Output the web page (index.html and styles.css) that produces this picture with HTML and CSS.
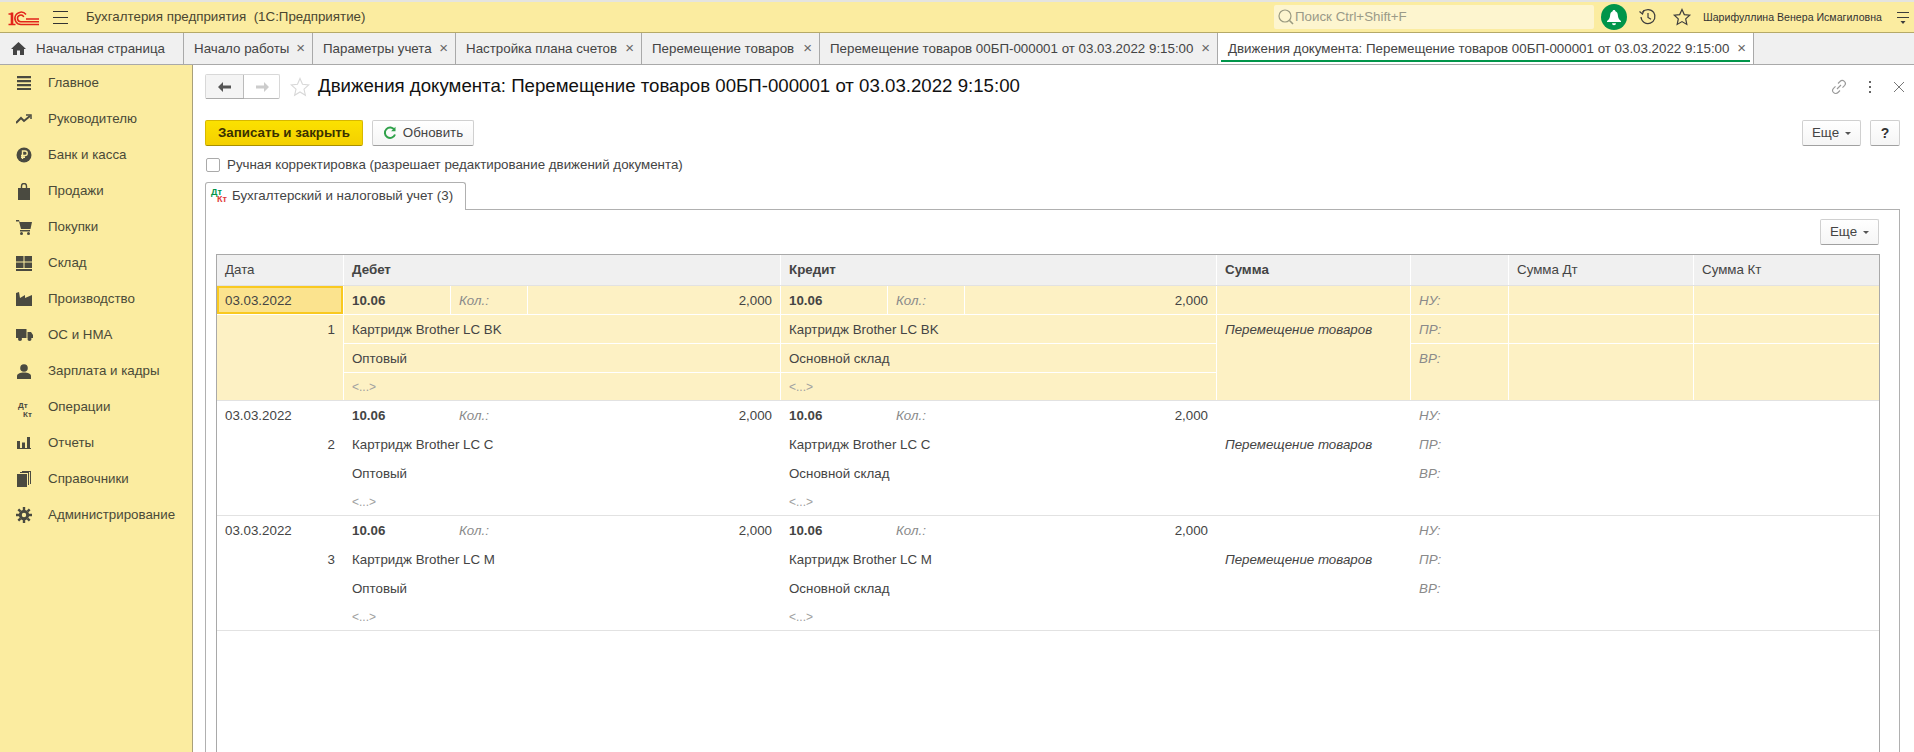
FILE: index.html
```html
<!DOCTYPE html>
<html lang="ru">
<head>
<meta charset="utf-8">
<title>Движения документа</title>
<link rel="stylesheet" href="styles.css">
</head>
<body>
<div class="app">
  <header class="topbar">
    <svg class="logo" width="31" height="17" viewBox="0 0 31 17" fill="none" stroke="#e2231a">
      <path d="M4 3.500V15" stroke-width="2.600"/>
      <path d="M0.500 5H4M0.500 15.500H7.500" stroke-width="1.600"/>
      <path d="M31 15.500H13A6.200 6.200 0 1 1 18 5.500" stroke-width="1.500"/>
      <path d="M31 12.700H13A3.300 3.300 0 1 1 15.800 8" stroke-width="1.500"/>
      <path d="M18 10H31" stroke-width="1.500"/>
    </svg>
    <span class="burger"><i></i><i></i><i></i></span>
    <span class="app-title">Бухгалтерия предприятия&nbsp; (1С:Предприятие)</span>
    <div class="search">
      <svg width="17" height="18" viewBox="0 0 17 18" fill="none" stroke="#9a9a80" stroke-width="1.2"><circle cx="8" cy="8" r="6"/><path d="M12.5 12.5 L16 16" stroke-width="1.6"/></svg>
      <span>Поиск Ctrl+Shift+F</span>
    </div>
    <span class="bell">
      <svg width="16" height="17" viewBox="0 0 16 17" fill="#fff"><path d="M8 1c.8 0 1.300.5 1.400 1.200 1.800.6 2.300 2.300 2.500 4.200.2 2.700 1.200 4.100 3.100 5.600v1H1v-1c1.900-1.500 2.900-2.900 3.100-5.600.2-1.900.7-3.600 2.500-4.200C6.700 1.500 7.200 1 8 1z"/><path d="M6 14.200h4a2 2 0 0 1-4 0z"/></svg>
    </span>
    <svg class="hist" width="20" height="20" viewBox="0 0 20 20" fill="none" stroke="#3c3c3c" stroke-width="1.2"><path d="M4.500 5.200A7 7 0 1 1 3 10"/><path d="M1.500 4.500 L4.500 7 L5.800 3.200" /><path d="M10 6v4.500l3 1.800"/></svg>
    <svg class="fav" width="20" height="20" viewBox="0 0 20 20" fill="none" stroke="#3c3c3c" stroke-width="1.2"><path d="M10 2.500l2.300 5.100 5.400.6-4 3.700 1.100 5.500L10 14.600l-4.800 2.800 1.100-5.500-4-3.700 5.400-.6z"/></svg>
    <span class="user">Шарифуллина Венера Исмагиловна</span>
    <svg class="more" width="14" height="16" viewBox="0 0 14 16"><path d="M1 3.500h12M1 8.500h12" stroke="#3c3c3c" stroke-width="1"/><path d="M4.500 12h5L7 15z" fill="#3c3c3c"/></svg>
  </header>

  <nav class="tabs">
    <div class="tab tab-home">
      <svg width="15" height="13" viewBox="0 0 15 13" fill="#444"><path d="M7.500 0L15 7h-2v6H9V8.500H6V13H2V7H0z"/></svg>
      <span>Начальная страница</span>
    </div>
    <div class="tab tab-w1"><span>Начало работы</span><b class="x">×</b></div>
    <div class="tab tab-w2"><span>Параметры учета</span><b class="x">×</b></div>
    <div class="tab tab-w3"><span>Настройка плана счетов</span><b class="x">×</b></div>
    <div class="tab tab-w4"><span>Перемещение товаров</span><b class="x">×</b></div>
    <div class="tab tab-w5"><span>Перемещение товаров 00БП-000001 от 03.03.2022 9:15:00</span><b class="x">×</b></div>
    <div class="tab tab-w6 active"><span>Движения документа: Перемещение товаров 00БП-000001 от 03.03.2022 9:15:00</span><b class="x">×</b></div>
  </nav>

  <div class="main">
    <aside class="sidebar">
      <div class="item"><span class="ico"><svg width="16" height="14" viewBox="0 0 16 14" fill="#4a4a40"><path d="M1 0h14v2.200H1zM1 4h14v2.200H1zM1 8h14v2.200H1zM1 12h14v2H1z"/></svg></span>Главное</div>
      <div class="item"><span class="ico"><svg width="16" height="10" viewBox="0 0 16 10" fill="none" stroke="#4a4a40" stroke-width="2"><path d="M0 9l5-5 3 3 6-5"/><path d="M10 1h5v4" stroke-width="1.500"/></svg></span>Руководителю</div>
      <div class="item"><span class="ico"><svg width="16" height="16" viewBox="0 0 16 16"><circle cx="8" cy="8" r="7.500" fill="#4a4a40"/><path d="M6.500 12V4h2.500a2.200 2.200 0 0 1 0 4.500H5M5 10.200h4" fill="none" stroke="#fbeca0" stroke-width="1.400"/></svg></span>Банк и касса</div>
      <div class="item"><span class="ico"><svg width="14" height="17" viewBox="0 0 14 17" fill="#4a4a40"><path d="M1 5h12v12H1z"/><path d="M4.500 6V3a2.500 2.500 0 0 1 5 0v3" fill="none" stroke="#4a4a40" stroke-width="1.400"/></svg></span>Продажи</div>
      <div class="item"><span class="ico"><svg width="16" height="15" viewBox="0 0 16 15" fill="#4a4a40"><path d="M0 0h3l.6 2H16l-1.500 7H5L3 1.500H0z"/><path d="M4 10h10v1.500H4z"/><circle cx="5.500" cy="13.500" r="1.500"/><circle cx="12.500" cy="13.500" r="1.500"/></svg></span>Покупки</div>
      <div class="item"><span class="ico"><svg width="16" height="15" viewBox="0 0 16 15" fill="#4a4a40"><path d="M0 0h7.500v5.500H0zM8.500 0H16v5.500H8.500zM0 6.500h7.500V12H0zM8.500 6.500H16V12H8.500zM0 13h16v2H0z"/></svg></span>Склад</div>
      <div class="item"><span class="ico"><svg width="16" height="14" viewBox="0 0 16 14" fill="#4a4a40"><path d="M0 14V1l3-1 1 6 5-3v3l7-3v11z"/></svg></span>Производство</div>
      <div class="item"><span class="ico"><svg width="17" height="12" viewBox="0 0 17 12" fill="#4a4a40"><path d="M0 0h10.500v9H0zM11.500 3H15l2 3v3h-5.500z"/><circle cx="4" cy="10" r="2"/><circle cx="13.500" cy="10" r="2"/></svg></span>ОС и НМА</div>
      <div class="item"><span class="ico"><svg width="14" height="15" viewBox="0 0 14 15" fill="#4a4a40"><circle cx="7" cy="4" r="3.800"/><path d="M0 15v-3c0-2 3-3.500 7-3.500s7 1.500 7 3.500v3z"/></svg></span>Зарплата и кадры</div>
      <div class="item"><span class="ico-text"><span class="dtkt nav"><em>Дт</em><em>Кт</em></span></span>Операции</div>
      <div class="item"><span class="ico"><svg width="14" height="12" viewBox="0 0 14 12" fill="#4a4a40"><path d="M0 4h3v7H0zM5 5.500h3V11H5zM10 0h3v11h-3zM0 11h14v1H0z"/></svg></span>Отчеты</div>
      <div class="item"><span class="ico"><svg width="14" height="16" viewBox="0 0 14 16" fill="#4a4a40"><path d="M0 3h10v13H0z"/><path d="M11.500 2v12M13.500 0v13M3 1.500h9M5 .5h9" fill="none" stroke="#4a4a40"/></svg></span>Справочники</div>
      <div class="item"><span class="ico"><svg width="16" height="16" viewBox="0 0 16 16" fill="none" stroke="#4a4a40"><circle cx="8" cy="8" r="3.700" stroke-width="3"/><path d="M8 0v3M8 13v3M0 8h3M13 8h3M2.300 2.300l2.100 2.100M11.600 11.600l2.100 2.100M2.300 13.700l2.100-2.100M11.600 4.400l2.100-2.100" stroke-width="2.400"/></svg></span>Администрирование</div>
    </aside>

    <section class="content">
      <div class="titlebar">
        <div class="navbtns">
          <span class="navbtn"><svg width="14" height="10" viewBox="0 0 14 10" fill="#555"><path d="M0 5l5-5v3.500h8v3H5V10z"/></svg></span>
          <span class="navbtn"><svg width="14" height="10" viewBox="0 0 14 10" fill="#ccc"><path d="M14 5L9 0v3.500H1v3h8V10z"/></svg></span>
        </div>
        <svg class="title-star" width="20" height="20" viewBox="0 0 20 20" fill="none" stroke="#d8d8d8" stroke-width="1.100"><path d="M10 1.500l2.500 5.800 6.200.6-4.700 4.200 1.400 6.200L10 15l-5.400 3.300L6 12.100 1.300 7.900l6.200-.6z"/></svg>
        <h1>Движения документа: Перемещение товаров 00БП-000001 от 03.03.2022 9:15:00</h1>
        <div class="win-icons">
          <svg width="16" height="16" viewBox="0 0 16 16" fill="none" stroke="#999" stroke-width="1.100"><path d="M6 10l4-4M7 4.500l2-2a3 3 0 0 1 4.500 4.200l-2 2M9 11.500l-2 2A3 3 0 0 1 2.500 9.300l2-2"/></svg>
          <svg width="4" height="14" viewBox="0 0 4 14" fill="#666"><rect x="1" y="1" width="2" height="2"/><rect x="1" y="6" width="2" height="2"/><rect x="1" y="11" width="2" height="2"/></svg>
          <svg width="12" height="12" viewBox="0 0 12 12" stroke="#777" stroke-width="1"><path d="M1 1l10 10M11 1L1 11"/></svg>
        </div>
      </div>

      <div class="cmdbar">
        <button class="btn primary">Записать и закрыть</button>
        <button class="btn refresh">
          <svg width="14" height="14" viewBox="0 0 14 14" fill="none" stroke="#2fa14a" stroke-width="2"><path d="M11.500 4A5.200 5.200 0 1 0 12 8.500"/><path d="M12.500 .8v4.400H8.100" fill="#2fa14a" stroke-width="0"/></svg>
          Обновить
        </button>
        <button class="btn more-btn">Еще<i class="caret"></i></button>
        <button class="btn help">?</button>
      </div>

      <label class="check"><span class="box"></span>Ручная корректировка (разрешает редактирование движений документа)</label>

      <div class="pagetabs">
        <div class="pagetab"><span class="dtkt"><em class="g">Дт</em><em class="r">Кт</em></span>Бухгалтерский и налоговый учет (3)</div>
      </div>

      <div class="panel">
        <div class="panel-cmd"><button class="btn more-btn">Еще<i class="caret"></i></button></div>
        <div class="table">
          <div class="thead">
            <div class="th">Дата</div>
            <div class="th strong s3">Дебет</div>
            <div class="th strong s3">Кредит</div>
            <div class="th strong">Сумма</div>
            <div class="th"></div>
            <div class="th">Сумма Дт</div>
            <div class="th">Сумма Кт</div>
          </div>

          <div class="trow selected">
            <div class="c current">03.03.2022</div>
            <div class="c strong">10.06</div><div class="c lbl">Кол.:</div><div class="c num">2,000</div>
            <div class="c strong">10.06</div><div class="c lbl">Кол.:</div><div class="c num">2,000</div>
            <div class="c"></div><div class="c lbl">НУ:</div><div class="c"></div><div class="c"></div>
            <div class="c num v3">1</div>
            <div class="c s3">Картридж Brother LC BK</div>
            <div class="c s3">Картридж Brother LC BK</div>
            <div class="c it v3">Перемещение товаров</div>
            <div class="c lbl">ПР:</div><div class="c"></div><div class="c"></div>
            <div class="c s3">Оптовый</div>
            <div class="c s3">Основной склад</div>
            <div class="c lbl v2">ВР:</div><div class="c v2"></div><div class="c v2"></div>
            <div class="c s3 ph">&lt;...&gt;</div>
            <div class="c s3 ph">&lt;...&gt;</div>
          </div>

          <div class="trow">
            <div class="c">03.03.2022</div>
            <div class="c strong">10.06</div><div class="c lbl">Кол.:</div><div class="c num">2,000</div>
            <div class="c strong">10.06</div><div class="c lbl">Кол.:</div><div class="c num">2,000</div>
            <div class="c"></div><div class="c lbl">НУ:</div><div class="c"></div><div class="c"></div>
            <div class="c num v3">2</div>
            <div class="c s3">Картридж Brother LC C</div>
            <div class="c s3">Картридж Brother LC C</div>
            <div class="c it v3">Перемещение товаров</div>
            <div class="c lbl">ПР:</div><div class="c"></div><div class="c"></div>
            <div class="c s3">Оптовый</div>
            <div class="c s3">Основной склад</div>
            <div class="c lbl v2">ВР:</div><div class="c v2"></div><div class="c v2"></div>
            <div class="c s3 ph">&lt;...&gt;</div>
            <div class="c s3 ph">&lt;...&gt;</div>
          </div>

          <div class="trow">
            <div class="c">03.03.2022</div>
            <div class="c strong">10.06</div><div class="c lbl">Кол.:</div><div class="c num">2,000</div>
            <div class="c strong">10.06</div><div class="c lbl">Кол.:</div><div class="c num">2,000</div>
            <div class="c"></div><div class="c lbl">НУ:</div><div class="c"></div><div class="c"></div>
            <div class="c num v3">3</div>
            <div class="c s3">Картридж Brother LC M</div>
            <div class="c s3">Картридж Brother LC M</div>
            <div class="c it v3">Перемещение товаров</div>
            <div class="c lbl">ПР:</div><div class="c"></div><div class="c"></div>
            <div class="c s3">Оптовый</div>
            <div class="c s3">Основной склад</div>
            <div class="c lbl v2">ВР:</div><div class="c v2"></div><div class="c v2"></div>
            <div class="c s3 ph">&lt;...&gt;</div>
            <div class="c s3 ph">&lt;...&gt;</div>
          </div>
        </div>
      </div>
    </section>
  </div>
</div>
</body>
</html>
```

FILE: styles.css
```css
* { box-sizing: border-box; }
html, body { margin: 0; padding: 0; height: 100%; overflow: hidden; background: #fff; }
body { font: 13.33px/1.2 "Liberation Sans", Arial, sans-serif; color: #333; }
.app { height: 752px; display: flex; flex-direction: column; overflow: hidden; }

/* top bar */
.topbar { height: 33px; flex: none; display: flex; align-items: center; background: #fbeca0; border-top: 2px solid #e4e4e0; border-bottom: 1px solid #b5a968; }
.logo { margin-left: 8px; flex: none; }
.burger { margin-left: 14px; width: 15px; display: flex; flex-direction: column; gap: 5px; flex: none; }
.burger i { display: block; height: 1px; background: #333; }
.app-title { margin-left: 18px; color: #4a4630; white-space: pre; width: 1188px; flex: none; }
.search { width: 320px; height: 24px; flex: none; display: flex; align-items: center; gap: 1px; padding-left: 3px; background: #fdf5cf; color: #9a9a88; border-radius: 2px; }
.bell { width: 26px; height: 26px; margin-left: 7px; flex: none; border-radius: 50%; background: #00954a; display: flex; align-items: center; justify-content: center; }
.hist { margin-left: 11px; flex: none; }
.fav { margin-left: 14px; flex: none; }
.user { margin-left: 11px; width: 189px; flex: none; font-size: 10.6px; color: #333; white-space: nowrap; }
.more { flex: none; margin-left: 4px; }

/* open-window tabs */
.tabs { height: 32px; flex: none; display: flex; background: #f0f0f0; border-bottom: 1px solid #a9a9a9; }
.tab { position: relative; display: flex; align-items: center; padding-left: 10px; border-right: 1px solid #a9a9a9; color: #444; white-space: nowrap; flex: none; }
.tab .x { position: absolute; right: 7px; top: 6px; font-weight: 400; font-size: 15px; line-height: 18px; color: #666; }
.tab-home { width: 184px; padding-left: 11px; gap: 10px; }
.tab-w1 { width: 129px; }
.tab-w2 { width: 143px; }
.tab-w3 { width: 186px; }
.tab-w4 { width: 178px; }
.tab-w5 { width: 398px; }
.tab-w6 { width: 536px; }
.tab.active { background: #fff; }
.tab.active::after { content: ""; position: absolute; left: 3px; right: 3px; bottom: 2px; height: 2px; background: #00954a; }

/* left navigation */
.main { flex: 1; display: flex; min-height: 0; }
.sidebar { width: 193px; flex: none; background: #fbeca0; border-right: 1px solid #a9a07a; }
.item { height: 36px; display: flex; align-items: center; color: #4a4a38; }
.ico { width: 48px; flex: none; display: flex; justify-content: center; }
.ico-text { width: 48px; flex: none; padding-left: 18px; }

.dtkt { display: inline-flex; flex-direction: column; flex: none; font-size: 9px; line-height: 7px; font-weight: 700; width: 18px; white-space: nowrap; }
.dtkt em { font-style: normal; }
.dtkt em + em { padding-left: 6px; }
.dtkt .g { color: #00954a; }
.dtkt .r { color: #e03a3a; }
.dtkt.nav { font-size: 8px; line-height: 9px; width: 14px; color: #4a4a40; }
.dtkt.nav em + em { padding-left: 5px; }

/* content */
.content { flex: 1; min-width: 0; display: flex; flex-direction: column; padding: 9px 14px 0 12px; }
.titlebar { height: 25px; flex: none; display: flex; align-items: center; }
.navbtns { width: 75px; height: 25px; flex: none; display: flex; border: 1px solid #d8d8d8; border-bottom-color: #bbb; border-radius: 2px; background: #fff; }
.navbtn { flex: 1; display: flex; align-items: center; justify-content: center; }
.navbtn:first-child { background: #f4f4f4; border-right: 1px solid #bbb; box-shadow: 0 1px 0 #aaa; flex: none; width: 38px; }
.title-star { margin-left: 10px; flex: none; }
h1 { margin: 0 0 0 8px; font-size: 18.67px; font-weight: 400; color: #111; white-space: nowrap; flex: 1; }
.win-icons { display: flex; align-items: center; gap: 21px; flex: none; margin-right: -5px; padding-top: 1px; }

.cmdbar { margin-top: 21px; height: 26px; flex: none; display: flex; gap: 9px; }
.btn { height: 26px; padding: 0; font: inherit; color: #444; border: 1px solid #d0d0d0; border-bottom-color: #a0a0a0; border-radius: 2px; background: linear-gradient(#fff, #f5f5f5); display: inline-flex; align-items: center; justify-content: center; }
.primary { width: 158px; font-weight: 700; color: #3a3000; background: linear-gradient(#fbe100, #f4d000); border-color: #d8b800; border-bottom-color: #a89000; }
.refresh { width: 102px; gap: 6px; }
.more-btn { width: 59px; }
.help { width: 30px; font-weight: 700; color: #333; font-size: 14px; }
.cmdbar .more-btn { margin-left: auto; }
.caret { display: inline-block; margin-left: 6px; border-top: 3px solid #555; border-left: 3px solid transparent; border-right: 3px solid transparent; }

.check { margin-top: 12px; height: 14px; flex: none; display: flex; align-items: center; color: #444; }
.box { width: 14px; height: 14px; margin: 0 7px 0 1px; border: 1px solid #aaa; border-radius: 2px; background: #fff; }

.pagetabs { margin-top: 10px; height: 28px; flex: none; display: flex; margin-bottom: -1px; position: relative; z-index: 1; }
.pagetab { width: 261px; height: 28px; display: flex; align-items: center; gap: 3px; padding: 0 0 2px 5px; background: #fff; border: 1px solid #b0b0b0; border-bottom: 0; border-radius: 3px 3px 0 0; color: #444; white-space: nowrap; }

.panel { flex: 1; min-height: 0; display: flex; flex-direction: column; border: 1px solid #b0b0b0; border-bottom: 0; padding: 9px 20px 0 10px; }
.panel-cmd { height: 26px; flex: none; display: flex; justify-content: flex-end; margin-bottom: 9px; }

.table { flex: 1; width: 1664px; border: 1px solid #a9a9a9; border-bottom: 0; }
.thead, .trow { display: grid; grid-template-columns: 126px 106px 76px 252px 106px 76px 251px 193px 97px 184px 185px; column-gap: 1px; }
.thead { height: 31px; border-bottom: 1px solid #e2e2e2; }
.th { background: #f0f0f0; line-height: 30px; padding: 0 8px; color: #444; white-space: nowrap; }
.strong { font-weight: 700; }
.trow { grid-template-rows: 28px 28px 28px 27px; row-gap: 1px; height: 115px; border-bottom: 1px solid #e2e2e2; }
.c { line-height: 27px; padding: 1px 8px 0; color: #444; white-space: nowrap; }
.selected .c { background: #fdf1c4; }
.selected .c.current { background: #fbe38e; border: 2px solid #f9c920; padding: 1px 6px 0; line-height: 23px; }
.s3 { grid-column: span 3; }
.v3 { grid-row: span 3; }
.v2 { grid-row: span 2; }
.num { text-align: right; }
.lbl { font-style: italic; color: #8a8a8a; }
.it { font-style: italic; }
.ph { color: #a0a0a0; font-size: 12px; }
```
